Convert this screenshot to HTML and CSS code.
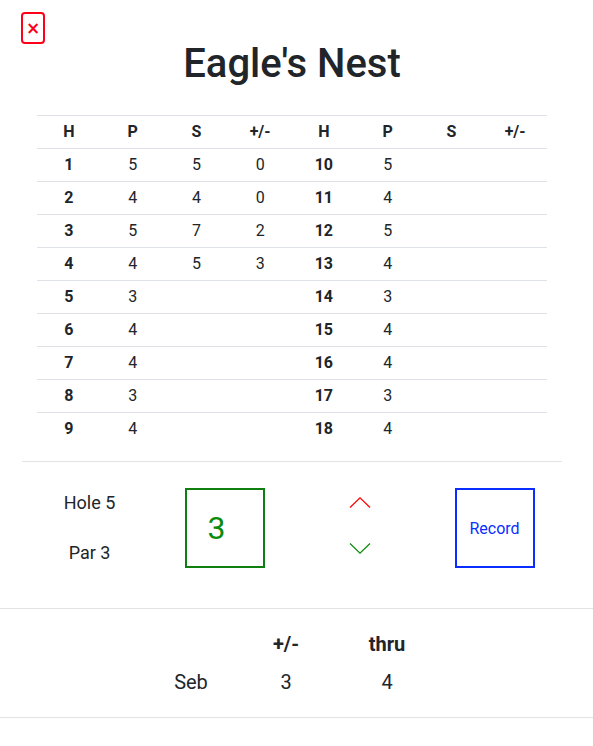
FILE: index.html
```html
<!DOCTYPE html>
<html lang="en">
<head>
<meta charset="utf-8">
<title>Eagle's Nest</title>
<link rel="stylesheet" href="styles.css">
</head>
<body>
<main class="container">
  <header class="top">
    <button class="close" type="button" aria-label="Close">×</button>
    <h1 class="title">Eagle's Nest</h1>
  </header>

  <table class="card">
    <thead>
      <tr><th>H</th><th>P</th><th>S</th><th>+/-</th><th>H</th><th>P</th><th>S</th><th>+/-</th></tr>
    </thead>
    <tbody>
      <tr><th>1</th><td>5</td><td>5</td><td>0</td><th>10</th><td>5</td><td></td><td></td></tr>
      <tr><th>2</th><td>4</td><td>4</td><td>0</td><th>11</th><td>4</td><td></td><td></td></tr>
      <tr><th>3</th><td>5</td><td>7</td><td>2</td><th>12</th><td>5</td><td></td><td></td></tr>
      <tr><th>4</th><td>4</td><td>5</td><td>3</td><th>13</th><td>4</td><td></td><td></td></tr>
      <tr><th>5</th><td>3</td><td></td><td></td><th>14</th><td>3</td><td></td><td></td></tr>
      <tr><th>6</th><td>4</td><td></td><td></td><th>15</th><td>4</td><td></td><td></td></tr>
      <tr><th>7</th><td>4</td><td></td><td></td><th>16</th><td>4</td><td></td><td></td></tr>
      <tr><th>8</th><td>3</td><td></td><td></td><th>17</th><td>3</td><td></td><td></td></tr>
      <tr><th>9</th><td>4</td><td></td><td></td><th>18</th><td>4</td><td></td><td></td></tr>
    </tbody>
  </table>

  <hr class="rule">

  <section class="controls">
    <div class="hole-info">
      <span>Hole 5</span>
      <span>Par 3</span>
    </div>
    <div class="cell"><div class="score">3</div></div>
    <div class="arrows">
      <button class="arrow up" type="button" aria-label="Increase">
        <svg width="22" height="11" viewBox="0 0 22 11"><path d="M1 10.5 L11 0.8 L21 10.5" fill="none" stroke="#ff0000" stroke-width="1.2"/></svg>
      </button>
      <button class="arrow down" type="button" aria-label="Decrease">
        <svg width="22" height="11" viewBox="0 0 22 11"><path d="M1 0.5 L11 10.2 L21 0.5" fill="none" stroke="#0a8a0a" stroke-width="1.2"/></svg>
      </button>
    </div>
    <div class="cell"><button class="record" type="button">Record</button></div>
  </section>
</main>

<section class="board">
  <div class="board-grid">
    <span></span><span class="bh">+/-</span><span class="bh">thru</span>
    <span>Seb</span><span>3</span><span>4</span>
  </div>
</section>
</body>
</html>
```

FILE: styles.css
```css
html, body {
  margin: 0;
  padding: 0;
  background: #fff;
}
body {
  font-family: Roboto, "Liberation Sans", Arial, sans-serif;
  color: #212529;
  font-size: 16px;
}
.container {
  width: 540px;
  margin-left: 22px;
}
.top {
  display: flex;
  flex-direction: column;
}
.close {
  align-self: flex-start;
  margin: 12px 0 0 -1px;
  width: 24px;
  height: 32px;
  padding: 0;
  border: 2px solid #ff0019;
  border-radius: 4px;
  background: #fff;
  color: #ff0019;
  font-family: "DejaVu Sans", sans-serif;
  font-size: 17px;
  font-weight: bold;
  line-height: 26px;
}
.title {
  margin: -4px 0 27px;
  text-align: center;
  font-size: 40px;
  line-height: 48px;
  font-weight: 500;
  color: #212529;
}
.card {
  width: 510px;
  margin: 0 15px;
  border-collapse: collapse;
  table-layout: fixed;
}
.card th, .card td {
  padding: 4px 0;
  line-height: 24px;
  text-align: center;
  font-size: 16px;
  border-top: 1px solid #dee2e6;
}
.card th { font-weight: 700; }
.card td { font-weight: 400; }
.rule {
  margin: 16px 0 0;
  border: 0;
  border-top: 1px solid #e3e3e3;
  height: 0;
}
.controls {
  display: grid;
  grid-template-columns: repeat(4, 1fr);
  padding: 26px 0 40px;
  align-items: center;
}
.hole-info {
  height: 80px;
  display: flex;
  flex-direction: column;
  justify-content: space-between;
  align-items: center;
  font-size: 18px;
  line-height: 30px;
}
.cell {
  display: flex;
  justify-content: center;
}
.score {
  box-sizing: border-box;
  width: 80px;
  height: 80px;
  border: 2px solid #0f7f0f;
  color: #0a8a0a;
  font-size: 32px;
  line-height: 76px;
  padding-left: 21px;
}
.arrows {
  height: 80px;
  display: flex;
  flex-direction: column;
  align-items: center;
}
.arrow {
  border: 0;
  background: none;
  padding: 0;
  width: 22px;
  height: 11px;
  display: block;
}
.arrow svg { display: block; }
.up { margin-top: 9px; }
.down { margin-top: 35px; }
.record {
  box-sizing: border-box;
  width: 80px;
  height: 80px;
  border: 2px solid #0a2eff;
  background: #fff;
  color: #0a2eff;
  font-family: Roboto, "Liberation Sans", Arial, sans-serif;
  font-size: 16px;
  padding: 0;
}
.board {
  border-top: 1px solid #e3e3e3;
  border-bottom: 1px solid #e3e3e3;
}
.board-grid {
  width: 298px;
  margin-left: 143px;
  display: grid;
  grid-template-columns: 96px 94px 108px;
  grid-template-rows: 38px 38px;
  padding: 16px 0 16px;
  align-items: center;
  justify-items: center;
  font-size: 20px;
}
.bh { font-weight: 700; }
```
